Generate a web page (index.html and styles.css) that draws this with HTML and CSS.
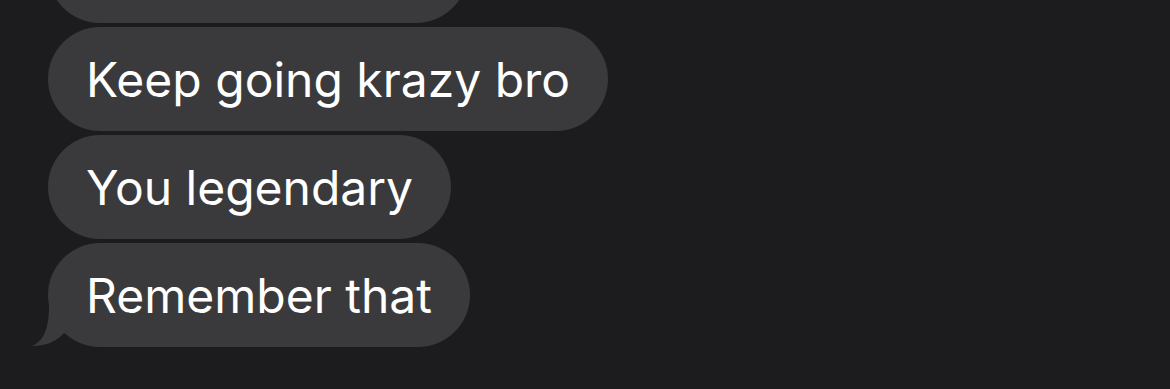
FILE: index.html
```html
<!DOCTYPE html>
<html>
<head>
    <meta charset='utf-8'>
    <title>Messages</title>
    <meta name='viewport' content='width=device-width, initial-scale=1'>
    <link rel="stylesheet" href="styles.css">
</head>

<body>
    <div id = "thread">
        <div class="bubble cutOff"></div>
        <div class="bubble">Keep going krazy bro</div>
        <div class="bubble">You legendary</div>
        <div class="bubble last">
            Remember that
            <svg class="tail" width="50" height="41" viewBox="0 0 50 41">
                <path d="M17,0 C17,22 12,35 0,40 Q20,40 31,28 L50,20 L50,0 Z" fill="#3a3a3d"/>
            </svg>
        </div>
    </div>
</body>
</html>
```

FILE: styles.css
```css
/* Page */
body{
    margin: 0;
    background: #1c1c1e;
    overflow: hidden;
}

/* Thread */
#thread{
    display: flex;
    flex-direction: column;
    align-items: flex-start;
    gap: 4px;
    padding-left: 48px;
    font-family: "Inter", "Noto Sans", sans-serif;
}

/* Bubbles */
.bubble{
    position: relative;
    box-sizing: border-box;
    height: 104px;
    padding: 0 38px;
    border-radius: 52px;
    background: #3a3a3d;
    color: #ffffff;
    font-size: 48px;
    display: flex;
    align-items: center;
    white-space: nowrap;
}
.cutOff{
    width: 420px;
    margin-top: -81px;
}
.tail{
    position: absolute;
    left: -16px;
    bottom: 0;
}
```
